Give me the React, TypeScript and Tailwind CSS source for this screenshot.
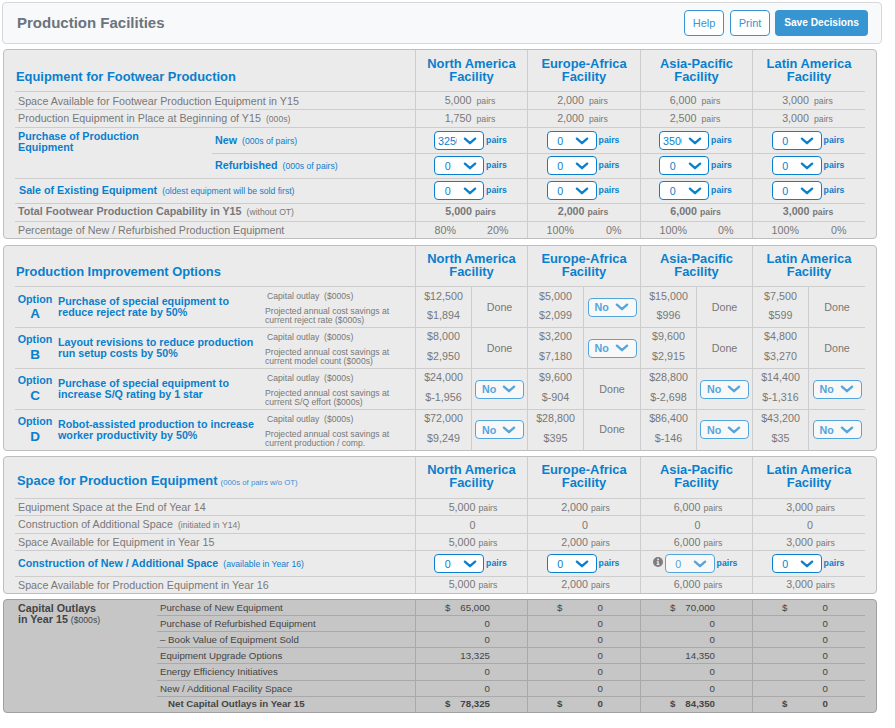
import { useState } from "react";
import type { ReactNode } from "react";

const FACILITIES = ["North America", "Europe-Africa", "Asia-Pacific", "Latin America"];

interface OptionCell {
  outlay: string;
  savings: string;
  done: boolean;
}

interface ImprovementOption {
  letter: string;
  title: [string, string];
  basis: string;
  cells: OptionCell[];
}

const OPTIONS: ImprovementOption[] = [
  {
    letter: "A",
    title: ["Purchase of special equipment to", "reduce reject rate by 50%"],
    basis: "current reject rate ($000s)",
    cells: [
      { outlay: "$12,500", savings: "$1,894", done: true },
      { outlay: "$5,000", savings: "$2,099", done: false },
      { outlay: "$15,000", savings: "$996", done: true },
      { outlay: "$7,500", savings: "$599", done: true },
    ],
  },
  {
    letter: "B",
    title: ["Layout revisions to reduce production", "run setup costs by 50%"],
    basis: "current model count ($000s)",
    cells: [
      { outlay: "$8,000", savings: "$2,950", done: true },
      { outlay: "$3,200", savings: "$7,180", done: false },
      { outlay: "$9,600", savings: "$2,915", done: true },
      { outlay: "$4,800", savings: "$3,270", done: true },
    ],
  },
  {
    letter: "C",
    title: ["Purchase of special equipment to", "increase S/Q rating by 1 star"],
    basis: "current S/Q effort ($000s)",
    cells: [
      { outlay: "$24,000", savings: "$-1,956", done: false },
      { outlay: "$9,600", savings: "$-904", done: true },
      { outlay: "$28,800", savings: "$-2,698", done: false },
      { outlay: "$14,400", savings: "$-1,316", done: false },
    ],
  },
  {
    letter: "D",
    title: ["Robot-assisted production to increase", "worker productivity by 50%"],
    basis: "current production / comp.",
    cells: [
      { outlay: "$72,000", savings: "$9,249", done: false },
      { outlay: "$28,800", savings: "$395", done: true },
      { outlay: "$86,400", savings: "$-146", done: false },
      { outlay: "$43,200", savings: "$35", done: false },
    ],
  },
];

const OUTLAYS: { label: string; height: string; values: string[]; currency?: boolean; total?: boolean }[] = [
  { label: "Purchase of New Equipment", height: "h-4", values: ["65,000", "0", "70,000", "0"], currency: true },
  { label: "Purchase of Refurbished Equipment", height: "h-4", values: ["0", "0", "0", "0"] },
  { label: "– Book Value of Equipment Sold", height: "h-4", values: ["0", "0", "0", "0"] },
  { label: "Equipment Upgrade Options", height: "h-4", values: ["13,325", "0", "14,350", "0"] },
  { label: "Energy Efficiency Initiatives", height: "h-[17px]", values: ["0", "0", "0", "0"] },
  { label: "New / Additional Facility Space", height: "h-4", values: ["0", "0", "0", "0"] },
  {
    label: "Net Capital Outlays in Year 15",
    height: "h-[15px]",
    values: ["78,325", "0", "84,350", "0"],
    currency: true,
    total: true,
  },
];

const Chevron = () => (
  <svg viewBox="0 0 14 8" className="h-2 w-3.5 shrink-0" fill="none">
    <path
      d="M1.9 1.6 7 6.2l5.1-4.6"
      stroke="currentColor"
      strokeWidth="2.3"
      strokeLinecap="round"
      strokeLinejoin="round"
    />
  </svg>
);

const InfoIcon = () => (
  <svg viewBox="0 0 16 16" className="h-2.5 w-2.5 shrink-0">
    <circle cx="8" cy="8" r="8" fill="#7d7d7d" />
    <circle cx="8.1" cy="4" r="1.5" fill="#ebebeb" />
    <path d="M5.9 6.6h3.3v4.4h1.1v1.7H5.8V11h1.1V8.3h-1z" fill="#ebebeb" />
  </svg>
);

const Small = ({ children }: { children: ReactNode }) => (
  <span className="ml-[5px] text-[8.64px] font-normal">{children}</span>
);

interface PanelProps {
  dark?: boolean;
  children: ReactNode;
}

const Panel = ({ dark, children }: PanelProps) => (
  <section
    className={`ml-px flex w-[874px] flex-col rounded-[4px] border pl-[11px] ${
      dark ? "border-[#a0a0a0] bg-[#c6c6c6] text-[#444444]" : "border-[#bebebe] bg-[#ebebeb] text-[#787878]"
    }`}
  >
    {children}
  </section>
);

interface RowProps {
  label: ReactNode;
  cells: ReactNode[];
  height: string;
  last?: boolean;
  className?: string;
}

const Row = ({ label, cells, height, last, className = "" }: RowProps) => (
  <div className={`grid w-[850px] grid-cols-[401px_112px_113px_112px_112px] ${height} ${className}`}>
    <div className={`flex items-center border-r border-[#cdcdcd] pl-[3px] ${last ? "" : "border-b"}`}>{label}</div>
    {cells.map((cell, i) => (
      <div
        key={i}
        className={`flex items-center justify-center border-[#cdcdcd] ${i < 3 ? "border-r" : ""} ${
          last ? "" : "border-b"
        }`}
      >
        {cell}
      </div>
    ))}
  </div>
);

interface HeaderRowProps {
  title: ReactNode;
  height: string;
  titleClass: string;
  nameClass?: string;
}

const HeaderRow = ({ title, height, titleClass, nameClass = "mb-0.5" }: HeaderRowProps) => (
  <Row
    height={height}
    className="text-[12.9px] leading-[13px] font-bold text-[#0a7fcd]"
    label={<h2 className={titleClass}>{title}</h2>}
    cells={FACILITIES.map((name) => (
      <div className={`text-center ${nameClass}`}>
        {name}
        <br />
        Facility
      </div>
    ))}
  />
);

interface PairsProps {
  value: string;
  className?: string;
  unitClass?: string;
}

// Valor numérico seguido de la unidad
const Pairs = ({ value, className = "-ml-0.5", unitClass = "ml-[3px]" }: PairsProps) => (
  <span className={className}>
    {value}
    <span className={`text-[8.7px] ${unitClass}`}>pairs</span>
  </span>
);

const NumberSelect = ({ initial, info }: { initial: string; info?: boolean }) => {
  const [value] = useState(initial);
  return (
    <div className={`flex items-center text-[#0a7fcd] ${info ? "-ml-[3px]" : "-ml-0.5"}`}>
      {info && (
        <span className="mr-0.5 flex pb-[3px]">
          <InfoIcon />
        </span>
      )}
      <button
        type="button"
        className={`flex h-[19px] w-[50px] items-center rounded-[4px] border pl-[3px] ${
          info ? "border-[#54a5dc] bg-[#f8f8f8] text-[#54a5dc]" : "border-[#0a7fcd] bg-white"
        }`}
      >
        <span className="w-[19px] overflow-hidden text-center">{value}</span>
        <span className="ml-[5.5px] flex">
          <Chevron />
        </span>
      </button>
      <span className="ml-0.5 pb-px text-[8.7px] font-bold">pairs</span>
    </div>
  );
};

const YesNoSelect = () => (
  <button
    type="button"
    className="flex h-[19px] w-[49px] items-center rounded-[4px] border border-[#54a5dc] bg-[#f8f8f8] pl-1.5 font-bold text-[#54a5dc]"
  >
    <span className="w-5 text-left">No</span>
    <Chevron />
  </button>
);

const Percentages = ({ left, right }: { left: string; right: string }) => (
  <div className="flex w-full justify-between pr-[18.5px] pl-[18.5px]">
    <span>{left}</span>
    <span>{right}</span>
  </div>
);

const OptionLabel = ({ option, first }: { option: ImprovementOption; first: boolean }) => (
  <div className="flex h-full w-full">
    <div className="flex w-[34px] flex-col items-center font-bold text-[#0a7fcd]">
      <span className={`leading-3 ${first ? "mt-1.5 mb-0.5" : "mt-[5px] mb-[3px]"}`}>Option</span>
      <span className="text-[13.5px] leading-[14px]">{option.letter}</span>
    </div>
    <div className="mt-[9px] ml-1.5 w-[207px] leading-[11px] font-bold whitespace-nowrap text-[#0a7fcd]">
      {option.title[0]}
      <br />
      {option.title[1]}
    </div>
    <div className="text-[8.64px] leading-[9px] whitespace-pre">
      <div className="mt-[5px] ml-0.5">{"Capital outlay  ($000s)"}</div>
      <div className="mt-1.5">
        Projected annual cost savings at
        <br />
        {option.basis}
      </div>
    </div>
  </div>
);

interface OptionValuesProps {
  cell: OptionCell;
  first: boolean;
  last: boolean;
}

const OptionValues = ({ cell, first, last }: OptionValuesProps) => (
  <div className="flex h-full w-full">
    <div
      className={`flex w-14 flex-col items-center justify-between border-r border-[#cdcdcd] pb-1.5 leading-3 ${
        first ? "pt-[3px]" : "pt-0.5"
      }`}
    >
      <span>{cell.outlay}</span>
      <span>{cell.savings}</span>
    </div>
    <div className={`flex flex-1 items-center justify-center ${last ? "pb-px" : ""}`}>
      {cell.done ? <span className={last ? "pb-px" : ""}>Done</span> : <YesNoSelect />}
    </div>
  </div>
);

const CAPACITY = ["5,000", "2,000", "6,000", "3,000"];

const wideCells = (values: string[]) =>
  values.map((v) => <Pairs value={v} className="-ml-[3px]" unitClass="ml-[5px]" />);

const spaceCells = (values: string[]) => values.map((v) => <Pairs value={v} className="ml-[3px]" />);

const selectCells = (values: string[], infoIndex = -1) =>
  values.map((v, i) => <NumberSelect initial={v} info={i === infoIndex} />);

const App = () => (
  <main className="flex h-[728px] w-[895px] flex-col bg-white pt-0.5 pl-0.5 font-['Liberation_Sans',Arial,sans-serif] text-[10.72px] leading-[12px] text-[#787878]">
    <header className="mb-[5px] flex h-[42px] w-[880px] items-center rounded-[4px] border border-[#d6d8dc] bg-[#f8f9fb] pr-[13px] pl-3.5">
      <h1 className="flex-1 text-[15px] font-bold text-[#6b747c]">Production Facilities</h1>
      <div className="flex gap-1.5 text-[#3795d2]">
        <button type="button" className="h-[26px] w-10 rounded-[4px] border border-[#3795d2] bg-white text-[11px]">
          Help
        </button>
        <button type="button" className="h-[26px] w-10 rounded-[4px] border border-[#3795d2] bg-white text-[11px]">
          Print
        </button>
        <button
          type="button"
          className="-ml-px h-[26px] w-[93px] rounded-[4px] bg-[#3795d2] text-[10.2px] font-bold text-white"
        >
          Save Decisions
        </button>
      </div>
    </header>

    <div className="flex flex-col gap-[5px]">
      <div className="mb-px">
        <Panel>
          <HeaderRow height="h-[42px]" titleClass="-ml-0.5 pt-3" title="Equipment for Footwear Production" />
          <Row
            height="h-[18px]"
            label="Space Available for Footwear Production Equipment in Y15"
            cells={wideCells(CAPACITY)}
          />
          <Row
            height="h-[18px]"
            label={
              <span>
                Production Equipment in Place at Beginning of Y15<Small>(000s)</Small>
              </span>
            }
            cells={wideCells(["1,750", "2,000", "2,500", "3,000"])}
          />
          {/* Compra de equipo: nuevo y reacondicionado comparten la etiqueta */}
          <div className="grid w-[850px] grid-cols-[197px_653px]">
            <div className="border-b border-[#cdcdcd] pt-[3px] pl-[3px] leading-[11px] font-bold text-[#0a7fcd]">
              Purchase of Production
              <br />
              Equipment
            </div>
            <div>
              {[
                { name: "New", height: "h-[26px]", values: ["3250", "0", "3500", "0"] },
                { name: "Refurbished", height: "h-[25px] [&>div]:pb-px", values: ["0", "0", "0", "0"] },
              ].map((line) => (
                <div key={line.name} className={`grid grid-cols-[204px_112px_113px_112px_112px] ${line.height}`}>
                  <div className="flex items-center border-r border-b border-[#cdcdcd] pl-[3px] font-bold text-[#0a7fcd]">
                    <span>
                      {line.name}
                      <Small>(000s of pairs)</Small>
                    </span>
                  </div>
                  {selectCells(line.values).map((cell, i) => (
                    <div
                      key={i}
                      className={`flex items-center justify-center border-b border-[#cdcdcd] ${i < 3 ? "border-r" : ""}`}
                    >
                      {cell}
                    </div>
                  ))}
                </div>
              ))}
            </div>
          </div>
          <Row
            height="h-[25px]"
            className="[&>div]:pb-px"
            label={
              <span className="ml-px font-bold text-[#0a7fcd]">
                Sale of Existing Equipment<Small>(oldest equipment will be sold first)</Small>
              </span>
            }
            cells={selectCells(["0", "0", "0", "0"])}
          />
          <Row
            height="h-[18px]"
            className="font-bold [&>div]:pb-0.5"
            label={
              <span>
                Total Footwear Production Capability in Y15<Small>(without OT)</Small>
              </span>
            }
            cells={CAPACITY.map((v) => (
              <Pairs value={v} />
            ))}
          />
          <Row
            last
            height="h-4"
            label="Percentage of New / Refurbished Production Equipment"
            cells={[
              <Percentages left="80%" right="20%" />,
              <Percentages left="100%" right="0%" />,
              <Percentages left="100%" right="0%" />,
              <Percentages left="100%" right="0%" />,
            ]}
          />
        </Panel>
      </div>

      <Panel>
        <HeaderRow height="h-[41px]" titleClass="-ml-0.5 pt-[11px]" title="Production Improvement Options" />
        {OPTIONS.map((option, i) => (
          <Row
            key={option.letter}
            last={i === OPTIONS.length - 1}
            height={i === OPTIONS.length - 1 ? "h-10" : "h-[41px]"}
            label={<OptionLabel option={option} first={i === 0} />}
            cells={option.cells.map((cell) => (
              <OptionValues cell={cell} first={i === 0} last={i === OPTIONS.length - 1} />
            ))}
          />
        ))}
      </Panel>

      <Panel>
        <HeaderRow
          height="h-[42px]"
          titleClass="-ml-px pt-[7px]"
          nameClass="mb-[3.5px]"
          title={
            <>
              Space for Production Equipment
              <span className="ml-[3px] text-[7.8px] font-normal text-[#3f8fd2]">(000s of pairs w/o OT)</span>
            </>
          }
        />
        <Row height="h-[17px]" label="Equipment Space at the End of Year 14" cells={spaceCells(CAPACITY)} />
        <Row
          height="h-[18px]"
          label={
            <span>
              Construction of Additional Space<Small>(initiated in Y14)</Small>
            </span>
          }
          cells={FACILITIES.map(() => (
            <span className="ml-0.5">0</span>
          ))}
        />
        <Row height="h-[17px]" label="Space Available for Equipment in Year 15" cells={spaceCells(CAPACITY)} />
        <Row
          height="h-[26px]"
          label={
            <span className="font-bold text-[#0a7fcd]">
              Construction of New / Additional Space<Small>(available in Year 16)</Small>
            </span>
          }
          cells={selectCells(["0", "0", "0", "0"], 2)}
        />
        <Row
          last
          height="h-4"
          className="[&>div]:pb-px"
          label="Space Available for Production Equipment in Year 16"
          cells={spaceCells(CAPACITY)}
        />
      </Panel>

      <Panel dark>
        <div className="grid grid-cols-[142px_708px] text-[9.7px]">
          <div className="pt-[3px] pl-[3px] text-[10.72px] leading-[11px] font-bold">
            Capital Outlays
            <br />
            in Year 15 <span className="text-[8.64px] font-normal">($000s)</span>
          </div>
          <div>
            {OUTLAYS.map((line) => (
              <div
                key={line.label}
                className={`grid grid-cols-[259px_112px_113px_112px_112px] ${line.height} ${
                  line.total ? "font-bold [&>div]:pb-0.5" : ""
                }`}
              >
                <div
                  className={`flex items-center border-r border-[#a9a9a9] ${line.total ? "pl-[11px]" : "border-b pl-[3px]"}`}
                >
                  {line.label}
                </div>
                {line.values.map((value, i) => (
                  <div
                    key={i}
                    className={`flex items-center justify-between border-[#a9a9a9] pr-[37px] pl-[29px] ${
                      i < 3 ? "border-r" : ""
                    } ${line.total ? "" : "border-b"}`}
                  >
                    <span>{line.currency ? "$" : ""}</span>
                    <span>{value}</span>
                  </div>
                ))}
              </div>
            ))}
          </div>
        </div>
      </Panel>
    </div>
  </main>
);

export default App;
